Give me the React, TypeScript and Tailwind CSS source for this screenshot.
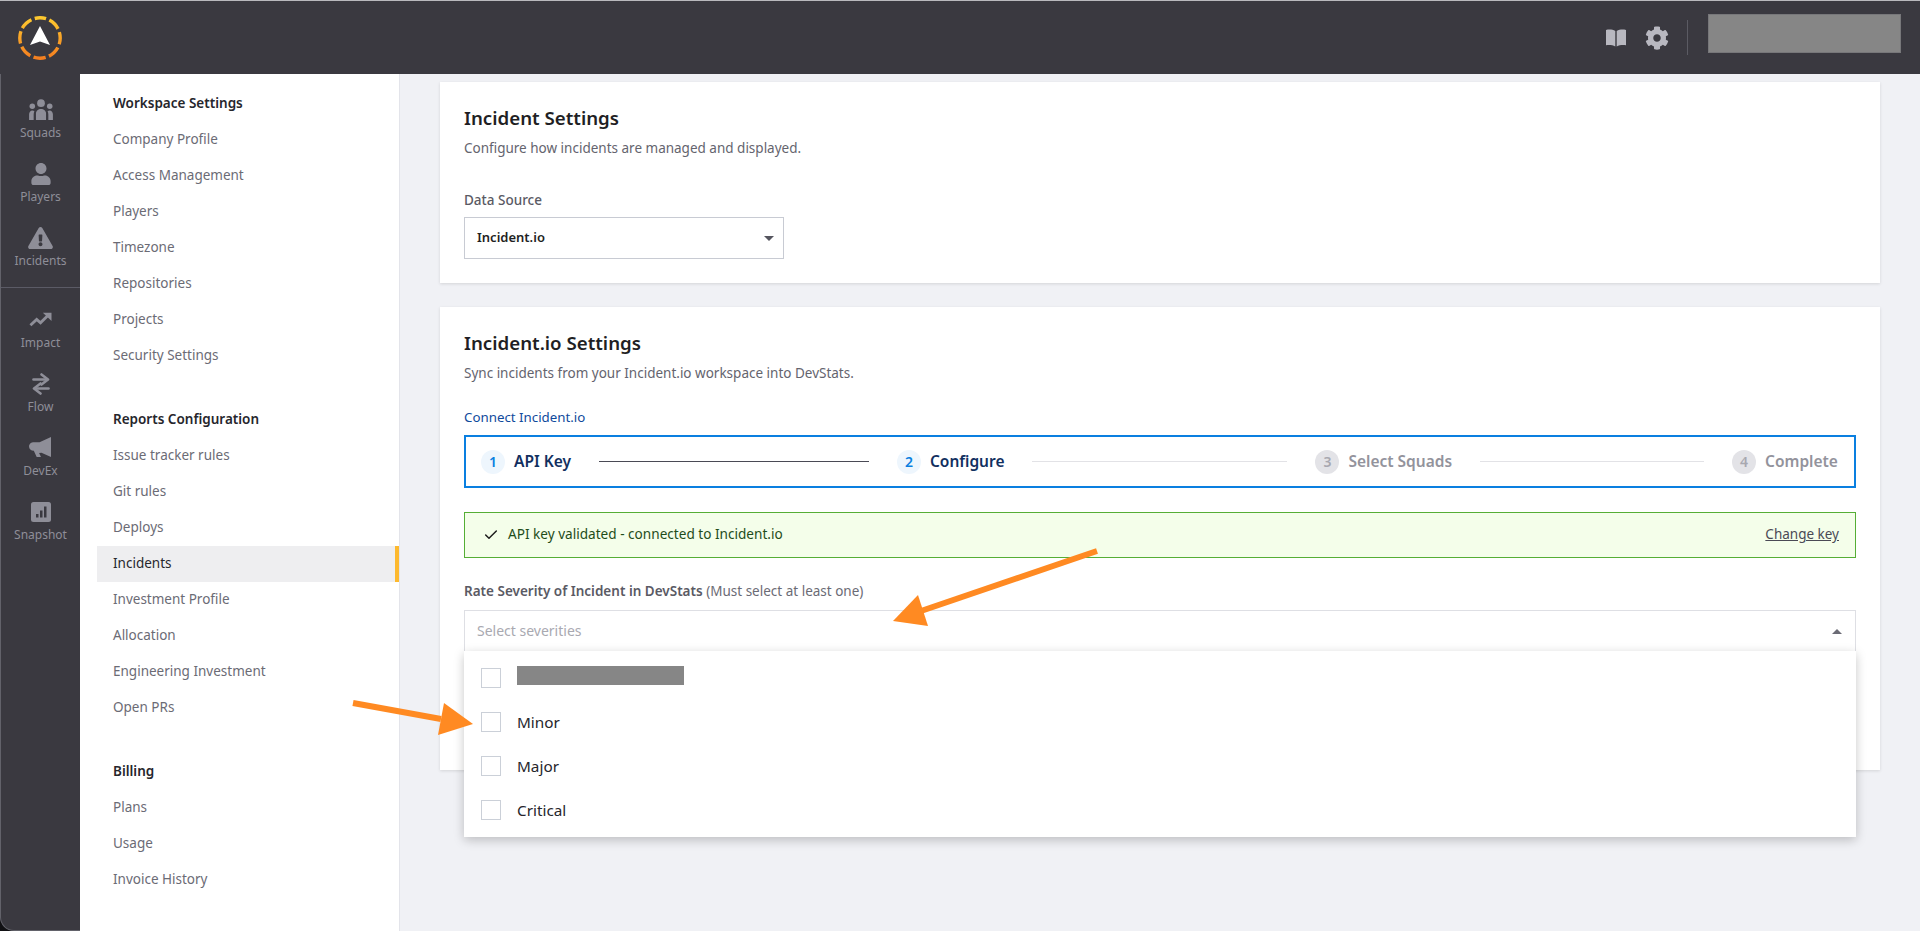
import { FaCog, FaExclamationTriangle, FaUser } from "react-icons/fa";
import { Check } from "lucide-react";

const font = { fontFamily: '"Noto Sans", sans-serif' };

const SquadsIcon = () => (
  <svg viewBox="0 0 28 24" className="w-[26px] h-[22px] fill-[#8e8e98]">
    <circle cx="14" cy="4.5" r="4.2" />
    <circle cx="4.5" cy="8" r="3" />
    <circle cx="23.5" cy="8" r="3" />
    <path d="M8.5 23v-7c0-3 2.5-5 5.5-5s5.500 2 5.500 5v7z" />
    <path d="M1 23v-6c0-2.500 1.500-4.500 3.500-4.500 1 0 1.800.3 2.300.8C6.300 14.500 6 15.500 6 17v6z" />
    <path d="M27 23v-6c0-2.500-1.500-4.500-3.500-4.500-1 0-1.800.3-2.300.8.500 1.200.8 2.200.8 3.700v6z" />
  </svg>
);

const ImpactIcon = () => (
  <svg viewBox="0 0 24 15" className="w-[23px] h-[15px]">
    <path d="M1.500 13.500 8 7.500l4 3.500L20 3" fill="none" stroke="#8e8e98" strokeWidth="3" />
    <path d="M14.500 0.500H23.500V9z" fill="#8e8e98" />
  </svg>
);

const FlowIcon = () => (
  <svg viewBox="0 0 20 22" className="w-5 h-[22px]">
    <path d="M2.500 6.500H15" fill="none" stroke="#8e8e98" strokeWidth="2.600" strokeLinecap="round" />
    <path d="M10.500 1.500 17 6.500 10.500 11.500" fill="none" stroke="#8e8e98" strokeWidth="2.600" strokeLinecap="round" strokeLinejoin="round" />
    <path d="M17.500 15.500H5" fill="none" stroke="#8e8e98" strokeWidth="2.600" strokeLinecap="round" />
    <path d="M9.500 10.500 3 15.500 9.500 20.500" fill="none" stroke="#8e8e98" strokeWidth="2.600" strokeLinecap="round" strokeLinejoin="round" />
  </svg>
);

const DevExIcon = () => (
  <svg viewBox="0 0 24 22" className="w-[23px] h-[21px] fill-[#8e8e98]">
    <path d="M23 0v21l-10-4.500-2.500.3L12.500 21H8L5 14.500C2 14.300 0 12.500 0 10c0-3 2.500-4.500 5-4.500h6z" />
  </svg>
);

const SnapshotIcon = () => (
  <svg viewBox="0 0 20 20" className="w-5 h-5">
    <rect width="20" height="20" rx="2.500" fill="#8e8e98" />
    <rect x="5" y="12" width="2.500" height="3.500" fill="#3a3940" />
    <rect x="9" y="8.500" width="2.500" height="7" fill="#3a3940" />
    <rect x="13" y="4.500" width="2.500" height="11" fill="#3a3940" />
  </svg>
);

const BookIcon = () => (
  <svg viewBox="0 0 20 18" className="w-5 h-[18px] fill-[#b8b8c0]">
    <path d="M0 1c3-.8 6.500-.6 9.300 1v15.500C6.500 16 3 15.700 0 16.300z" />
    <path d="M20 1c-3-.8-6.500-.6-9.300 1v15.500c2.800-1.500 6.300-1.800 9.300-1.200z" />
  </svg>
);

const Logo = () => (
  <svg viewBox="0 0 44 44" className="w-11 h-11">
    <defs>
      {/* the ring is rotated -90deg, so the x axis of the gradient runs bottom to top */}
      <linearGradient id="logo-ring" x1="1" y1="0" x2="0" y2="0">
        <stop offset="0" stopColor="#fdc82f" />
        <stop offset="1" stopColor="#f47f20" />
      </linearGradient>
    </defs>
    <g transform="rotate(-90 22 22)">
      <circle cx="22" cy="22" r="20.200" fill="none" stroke="url(#logo-ring)" strokeWidth="3.400" strokeDasharray="12.400 3.467" strokeDashoffset="6.200" />
    </g>
    <path d="M22 10 32 29 22 25.500 12 29z" fill="#ffffff" />
  </svg>
);

const railTop = [
  { label: "Squads", icon: <SquadsIcon /> },
  { label: "Players", icon: <FaUser className="w-5 h-[22px] text-[#8e8e98]" /> },
  { label: "Incidents", icon: <FaExclamationTriangle className="w-[25px] h-[22px] text-[#8e8e98]" /> },
];

const railBottom = [
  { label: "Impact", icon: <ImpactIcon /> },
  { label: "Flow", icon: <FlowIcon /> },
  { label: "DevEx", icon: <DevExIcon /> },
  { label: "Snapshot", icon: <SnapshotIcon /> },
];

const navGroups = [
  {
    title: "Workspace Settings",
    items: ["Company Profile", "Access Management", "Players", "Timezone", "Repositories", "Projects", "Security Settings"],
  },
  {
    title: "Reports Configuration",
    items: ["Issue tracker rules", "Git rules", "Deploys", "Incidents", "Investment Profile", "Allocation", "Engineering Investment", "Open PRs"],
  },
  {
    title: "Billing",
    items: ["Plans", "Usage", "Invoice History"],
  },
];

const RailItem = ({ label, icon }: { label: string; icon: React.ReactNode }) => (
  <div className="h-16 flex flex-col items-center justify-center gap-[3px]">
    <div className="h-[24px] flex items-center justify-center">{icon}</div>
    <span className="text-[12px] leading-[16px] text-[#8e8e98]">{label}</span>
  </div>
);

const Step = ({ n, label, active }: { n: number; label: string; active: boolean }) => (
  <div className="flex items-center gap-[9px]">
    <div
      className={
        active
          ? "w-6 h-6 rounded-full bg-[#eef6fd] text-[#0a7fe0] text-[14px] font-semibold flex items-center justify-center"
          : "w-6 h-6 rounded-full bg-[#e3e3e7] text-[#a8a8b0] text-[14px] font-semibold flex items-center justify-center"
      }
    >
      {n}
    </div>
    <span className={active ? "text-[15.500px] font-semibold text-[#12305f]" : "text-[15.500px] font-semibold text-[#93939c]"}>{label}</span>
  </div>
);

const Row = ({ children }: { children: React.ReactNode }) => (
  <div className="h-11 flex items-center pl-[17px]">
    <div className="w-5 h-5 border border-[#cbd0d8] bg-white shrink-0" />
    <div className="ml-4 text-[15.300px] text-[#26262c]">{children}</div>
  </div>
);

export default function App() {
  return (
    <div className="relative h-[931px] w-[1920px] overflow-hidden bg-[#111114]" style={font}>
      <header className="h-[74px] bg-[#3a3940] border-t border-[#b9b9bd] flex items-center justify-between pr-[19px]">
        <div className="w-20 flex justify-center pt-[1px]">
          <Logo />
        </div>
        <div className="flex items-center">
          <BookIcon />
          <FaCog className="ml-[19px] w-6 h-6 text-[#b8b8c0]" />
          <div className="ml-[18px] w-px h-[35px] bg-[#5b5b63]" />
          <div className="ml-5 w-[193px] h-[39px] -mt-[8px] bg-[#868686] border border-[#77777a]" />
        </div>
      </header>

      <div className="flex h-[857px]">
        <aside className="w-20 shrink-0 bg-[#3a3940] border-l border-b border-[#62626a] rounded-bl-[14px] pt-[13px]">
          {railTop.map((item) => (
            <RailItem key={item.label} label={item.label} icon={item.icon} />
          ))}
          <div className="h-px bg-[#5b5b66] mt-[8px] mb-[9px]" />
          {railBottom.map((item) => (
            <RailItem key={item.label} label={item.label} icon={item.icon} />
          ))}
        </aside>

        <nav className="w-[320px] shrink-0 bg-white border-r border-[#e3e4ea] pl-[17px] pt-[12px]">
          {navGroups.map((group) => (
            <div key={group.title} className="mb-7">
              <div className="h-9 flex items-center pl-4 pb-[1px] text-[13.500px] font-semibold text-[#26262c]">{group.title}</div>
              {group.items.map((item) =>
                item === "Incidents" ? (
                  <div key={item} className="h-9 flex items-center pl-4 pb-[1px] text-[13.500px] text-[#26262c] bg-[#eeeef0] border-r-4 border-[#fdb92e]">
                    {item}
                  </div>
                ) : (
                  <div key={item} className="h-9 flex items-center pl-4 pb-[1px] text-[13.500px] text-[#6b6b75]">
                    {item}
                  </div>
                )
              )}
            </div>
          ))}
        </nav>

        <main className="flex-1 bg-[#f0f1f5] px-10 pt-2">
          <section className="h-[201px] bg-white shadow-[0_1px_3px_rgba(0,0,0,0.12)] px-6 pt-6">
            <h2 className="text-[18.700px] leading-6 font-semibold text-[#1f1f24]">Incident Settings</h2>
            <p className="mt-[8px] text-[13.500px] leading-5 text-[#64646e]">Configure how incidents are managed and displayed.</p>
            <div className="mt-8 text-[13.500px] leading-5 font-medium text-[#5a5a64]">Data Source</div>
            <div className="mt-[7px] w-[320px] h-[42px] border border-[#c8cbd3] flex items-center justify-between pl-3 pr-[9px]">
              <span className="text-[13px] font-semibold text-[#1f1f24]">Incident.io</span>
              <div className="w-0 h-0 border-x-[5px] border-x-transparent border-t-[5px] border-t-[#55555e]" />
            </div>
          </section>

          <section className="relative mt-6 h-[463px] bg-white shadow-[0_1px_3px_rgba(0,0,0,0.12)] px-6 pt-6">
            <h2 className="text-[18.700px] leading-6 font-semibold text-[#1f1f24]">Incident.io Settings</h2>
            <p className="mt-[8px] text-[13.500px] leading-5 text-[#64646e]">Sync incidents from your Incident.io workspace into DevStats.</p>
            <div className="mt-[24px] text-[13.300px] leading-5 text-[#0f4a9c]">Connect Incident.io</div>
            <div className="mt-[8px] h-[53px] border-2 border-[#0a7fe0] flex items-center justify-between pl-[15px] pr-[16px]">
              <Step n={1} label="API Key" active />
              <div className="w-[270px] h-px bg-[#4a4a55]" />
              <Step n={2} label="Configure" active />
              <div className="w-[255px] h-px bg-[#e2e2e6]" />
              <Step n={3} label="Select Squads" active={false} />
              <div className="w-[224px] h-px bg-[#e2e2e6]" />
              <Step n={4} label="Complete" active={false} />
            </div>
            <div className="mt-[24px] h-[46px] bg-[#f4feea] border border-[#55ae35] flex items-center justify-between pl-[18px] pr-4">
              <div className="flex items-center gap-[9px]">
                <Check className="w-4 h-4 text-[#1c1c1c]" strokeWidth={2.2} />
                <span className="text-[13.600px] pb-[1px] text-[#1f4d1a]">API key validated - connected to Incident.io</span>
              </div>
              <span className="text-[13.500px] pb-[1px] text-[#4a4a55] underline">Change key</span>
            </div>
            <div className="mt-[23px] text-[13.500px] leading-5">
              <span className="font-semibold text-[#5a5a64]">Rate Severity of Incident in DevStats</span>
              <span className="text-[#6b6b75]"> (Must select at least one)</span>
            </div>
            <div className="mt-[9px] h-[42px] border border-[#dedfe4] flex items-center justify-between pl-3 pr-[13px]">
              <span className="text-[14px] pb-[1px] text-[#a9a9b1]">Select severities</span>
              <div className="w-0 h-0 border-x-[5px] border-x-transparent border-b-[5px] border-b-[#6b6b75]" />
            </div>

            <div className="absolute left-6 right-6 top-[344px] h-[186px] bg-white shadow-[0_3px_10px_rgba(0,0,0,0.22)] pt-[5px]">
              <Row>
                <div className="w-[167px] h-[19px] bg-[#868686] -mt-[6px]" />
              </Row>
              <Row>Minor</Row>
              <Row>Major</Row>
              <Row>Critical</Row>
            </div>
          </section>
        </main>
      </div>

      {/* annotation arrows drawn over the screenshot */}
      <svg className="absolute left-0 top-0 pointer-events-none" width="1920" height="931" viewBox="0 0 1920 931">
        <path d="M1097 551 921 611" fill="none" stroke="#ff8a22" strokeWidth="6" />
        <path d="M893 621 918 595 928 626z" fill="#ff8a22" />
        <path d="M353 703 441 719" fill="none" stroke="#ff8a22" strokeWidth="6" />
        <path d="M473 724 444 703 438 735z" fill="#ff8a22" />
      </svg>
    </div>
  );
}
